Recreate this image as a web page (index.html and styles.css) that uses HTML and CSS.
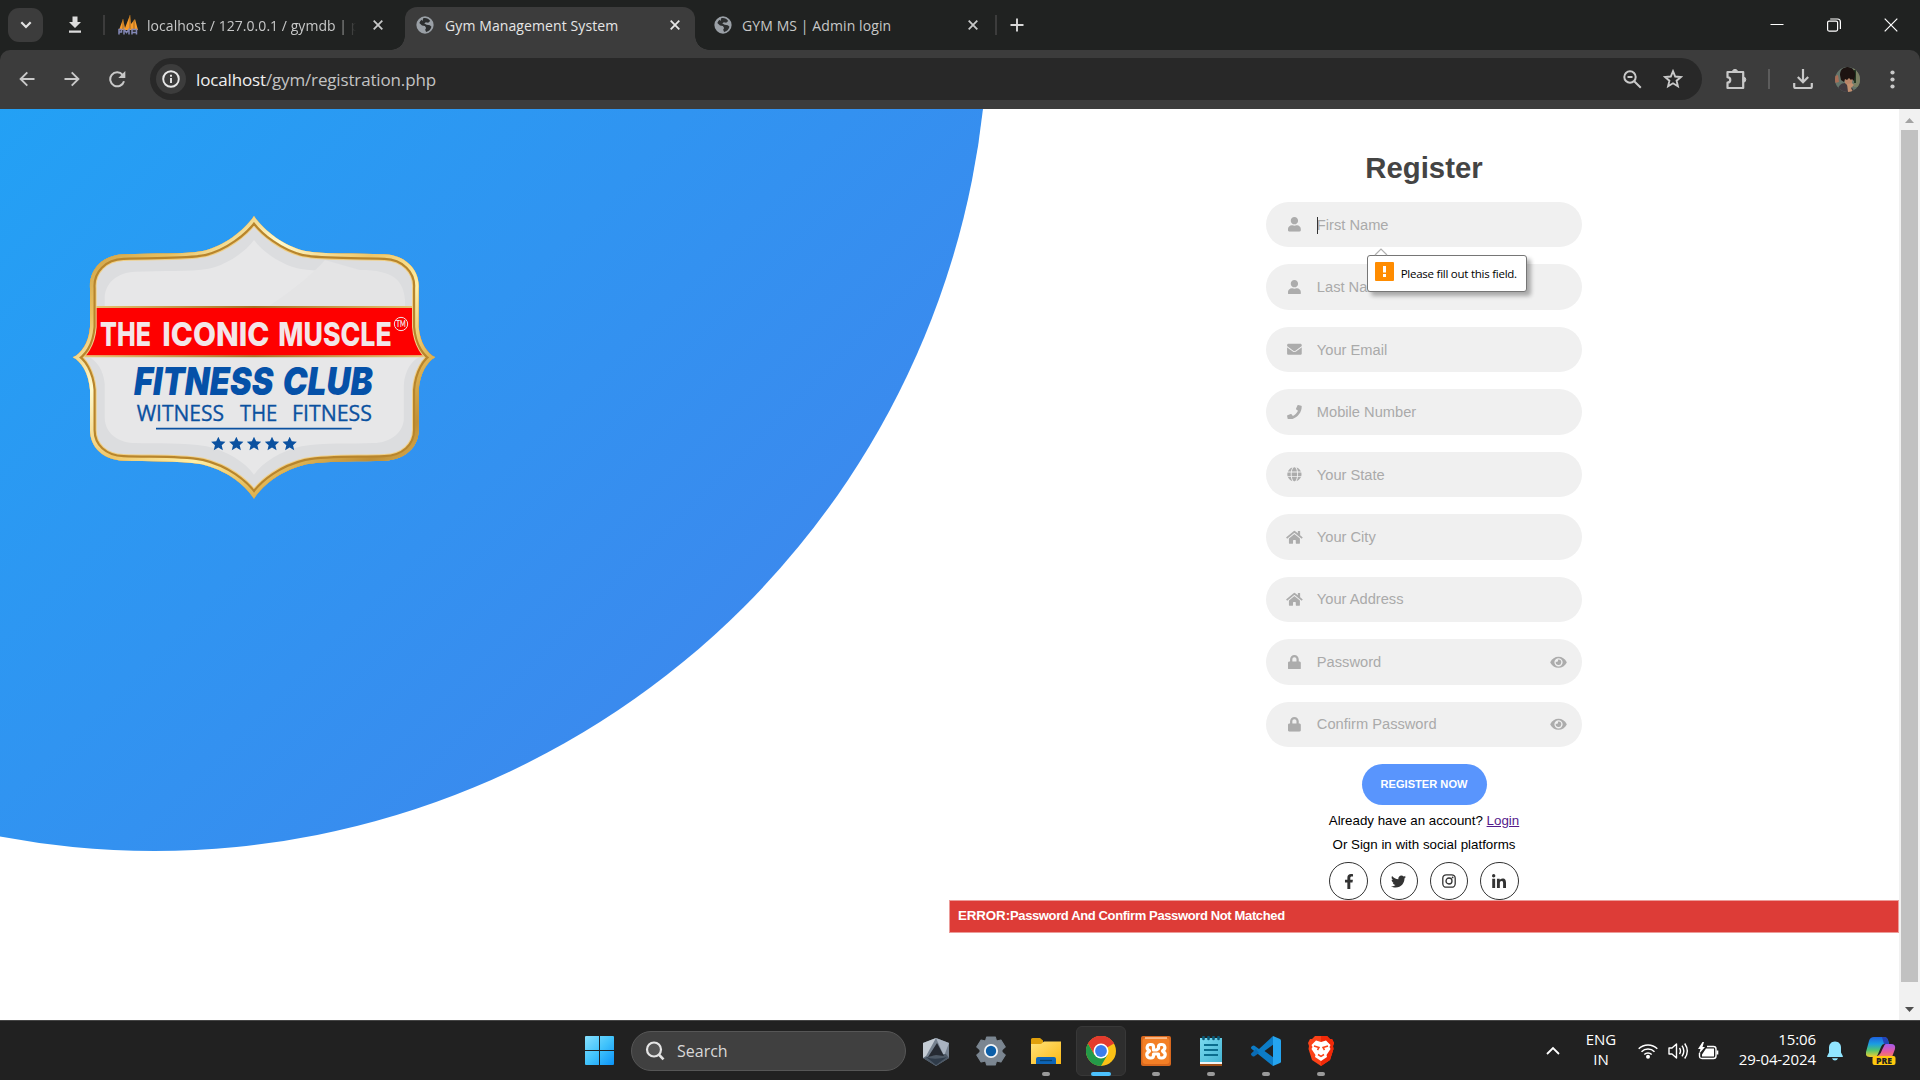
FILE: index.html
```html
<!DOCTYPE html>
<html lang="en">
<head>
<meta charset="utf-8">
<title>Gym Management System</title>
<link rel="stylesheet" href="styles.css">
</head>
<body>
<svg class="sprite" aria-hidden="true">
  <symbol id="i-user" viewBox="0 0 448 512"><path d="M224 256c70.700 0 128-57.300 128-128S294.700 0 224 0 96 57.300 96 128s57.300 128 128 128zm89.600 32h-16.700c-22.200 10.200-46.900 16-72.900 16s-50.600-5.800-72.900-16h-16.700C60.200 288 0 348.200 0 422.400V464c0 26.500 21.500 48 48 48h352c26.500 0 48-21.500 48-48v-41.600c0-74.200-60.200-134.400-134.400-134.400z"/></symbol>
  <symbol id="i-mail" viewBox="0 0 512 512"><path d="M502.300 190.800c3.900-3.100 9.700-.2 9.700 4.700V400c0 26.500-21.500 48-48 48H48c-26.500 0-48-21.500-48-48V195.600c0-5 5.700-7.800 9.700-4.700 22.400 17.400 52.100 39.500 154.100 113.600 21.100 15.400 56.700 47.800 92.200 47.600 35.700.3 72-32.800 92.300-47.600 102-74.100 131.600-96.300 154-113.700zM256 320c23.200.4 56.600-29.200 73.400-41.400 132.700-96.300 142.800-104.700 173.400-128.700 5.800-4.500 9.200-11.500 9.200-18.900v-19c0-26.500-21.500-48-48-48H48c-26.500 0-48 21.500-48 48v19c0 7.400 3.400 14.300 9.200 18.900 30.600 23.900 40.700 32.400 173.400 128.700 16.800 12.200 50.200 41.800 73.400 41.400z"/></symbol>
  <symbol id="i-phone" viewBox="0 0 512 512"><path d="M493.400 24.600l-104-24c-11.300-2.600-22.900 3.300-27.500 13.900l-48 112c-4.200 9.800-1.400 21.300 6.900 28l60.600 49.600c-36 76.700-98.900 140.500-177.200 177.200l-49.600-60.600c-6.800-8.300-18.200-11.100-28-6.900l-112 48C3.900 366.500-2 378.100.6 389.400l24 104C27.100 504.200 36.700 512 48 512c256.100 0 464-207.500 464-464 0-11.200-7.700-20.900-18.600-23.400z"/></symbol>
  <symbol id="i-globe" viewBox="0 0 496 512"><path d="M336.500 160C322 70.700 287.800 8 248 8s-74 62.700-88.500 152h177zM152 256c0 22.200 1.200 43.500 3.300 64h185.300c2.100-20.500 3.300-41.800 3.300-64s-1.200-43.500-3.300-64H155.300c-2.100 20.500-3.300 41.800-3.300 64zm324.700-96c-28.600-67.900-86.500-120.400-158-141.600 24.400 33.800 41.200 84.700 50 141.600h108zM177.200 18.400C105.800 39.600 47.800 92.100 19.300 160h108c8.700-56.900 25.500-107.800 49.900-141.600zM487.400 192H372.700c2.100 21 3.300 42.500 3.300 64s-1.200 43-3.300 64h114.600c5.500-20.500 8.600-41.800 8.600-64s-3.100-43.500-8.500-64zM120 256c0-21.500 1.200-43 3.300-64H8.600C3.200 212.500 0 233.800 0 256s3.200 43.500 8.600 64h114.600c-2-21-3.200-42.500-3.200-64zm39.500 96c14.500 89.300 48.700 152 88.500 152s74-62.700 88.500-152h-177zm159.300 141.600c71.400-21.200 129.400-73.700 158-141.600h-108c-8.800 56.900-25.600 107.800-50 141.600zM19.300 352c28.600 67.900 86.500 120.400 158 141.600-24.400-33.800-41.200-84.700-50-141.600h-108z"/></symbol>
  <symbol id="i-home" viewBox="0 0 576 512"><path d="M280.370 148.260L96 300.110V464a16 16 0 0 0 16 16l112.060-.29a16 16 0 0 0 15.920-16V368a16 16 0 0 1 16-16h64a16 16 0 0 1 16 16v95.640a16 16 0 0 0 16 16.050L464 480a16 16 0 0 0 16-16V300L295.670 148.260a12.190 12.190 0 0 0-15.300 0zM571.600 251.470L488 182.560V44.050a12 12 0 0 0-12-12h-56a12 12 0 0 0-12 12v72.610L318.470 43a48 48 0 0 0-61 0L4.340 251.470a12 12 0 0 0-1.600 16.900l25.500 31A12 12 0 0 0 45.150 301l235.220-193.740a12.190 12.190 0 0 1 15.300 0L530.900 301a12 12 0 0 0 16.900-1.600l25.500-31a12 12 0 0 0-1.700-16.930z"/></symbol>
  <symbol id="i-lock" viewBox="0 0 448 512"><path d="M400 224h-24v-72C376 68.200 307.800 0 224 0S72 68.200 72 152v72H48c-26.500 0-48 21.500-48 48v192c0 26.500 21.500 48 48 48h352c26.500 0 48-21.500 48-48V272c0-26.500-21.500-48-48-48zm-104 0H152v-72c0-39.700 32.300-72 72-72s72 32.300 72 72v72z"/></symbol>
  <symbol id="i-eye" viewBox="0 0 576 512"><path d="M572.520 241.400C518.290 135.590 410.930 64 288 64S57.680 135.640 3.480 241.410a32.350 32.350 0 0 0 0 29.190C57.710 376.410 165.070 448 288 448s230.320-71.640 284.520-177.410a32.350 32.350 0 0 0 0-29.190zM288 400a144 144 0 1 1 144-144 143.930 143.930 0 0 1-144 144zm0-240a95.310 95.310 0 0 0-25.310 3.790 47.850 47.850 0 0 1-66.900 66.900A95.780 95.780 0 1 0 288 160z"/></symbol>
  <symbol id="i-world" viewBox="0 0 20 20"><circle cx="10" cy="10" r="9.600" fill="#9aa0a6"/><path d="M8 2.600c3-.8 6.200.4 7.800 3L13.500 7.600l-2.600-.7-1.700 1.500 2.600 1.400 3.600.5 1.800 1.600c-.7 2.900-3 5.200-6 5.800l-1-2.300 1-2-1.300-2.300-3.200-.5-3-2.900c.5-1.300 1.300-2.500 2.400-3.400l1.100 1.300z" fill="#2c2e2f"/></symbol>
  <symbol id="i-close" viewBox="0 0 12 12"><path d="M1.700 1.700l8.600 8.600m0-8.600l-8.600 8.600" fill="none" stroke="currentColor" stroke-width="1.800"/></symbol>
  <symbol id="i-star" viewBox="-10 -10 20 20"><path d="M0-10 2.900-3.600 9.800-3 4.600 1.600 6.200 8.500 0 4.900-6.200 8.500-4.600 1.600-9.800-3-2.900-3.600z"/></symbol>
</svg>

<header class="tabstrip">
  <div class="tab-search"><svg width="12" height="8" viewBox="0 0 12 8"><path d="M1.300 1.300 6 6l4.700-4.700" fill="none" stroke="#e3e3e3" stroke-width="2.200"/></svg></div>
  <div class="tab-pinned"><svg width="14" height="18" viewBox="0 0 14 18" fill="#dcdcdc"><path d="M4.500.5h5V6H13L7 12 1 6h3.500zM1 14.500h12v2.200H1z"/></svg></div>
  <div class="tab tab-db">
    <svg width="20" height="20" viewBox="0 0 20 20"><path d="M1 15 5 4l2 9 5-13 1 9 4-5 3 11z" fill="#f89c2c"/><path d="M5 4v10M12 0v14M16 5v9" stroke="#8a5a20" stroke-width=".8"/><path d="M1 19.500v-5h2.500v2.500H1m5 2.500v-5l2.500 3 2.500-3v5m3 0v-5h4.500v5M14 17.500h4" fill="none" stroke="#8388b6" stroke-width="1.500"/></svg>
    <span class="tab-title faded">localhost / 127.0.0.1 / gymdb | p</span>
    <svg class="x" width="12" height="12"><use href="#i-close"/></svg>
  </div>
  <div class="tab tab-active">
    <svg width="18" height="18"><use href="#i-world"/></svg>
    <span class="tab-title">Gym Management System</span>
    <svg class="x" width="12" height="12"><use href="#i-close"/></svg>
  </div>
  <div class="tab tab-admin">
    <svg width="18" height="18"><use href="#i-world"/></svg>
    <span class="tab-title">GYM MS | Admin login</span>
    <svg class="x" width="12" height="12"><use href="#i-close"/></svg>
  </div>
  <svg class="new-tab" width="14" height="14" viewBox="0 0 14 14"><path d="M7 .5v13M.5 7h13" stroke="#d8d8d8" stroke-width="1.900"/></svg>
  <div class="window-buttons">
    <svg width="14" height="14" viewBox="0 0 14 14"><path d="M.5 6.500h13" stroke="#fff"/></svg>
    <svg width="14" height="14" viewBox="0 0 14 14"><g fill="none" stroke="#fff" stroke-width="1.200"><rect x=".6" y="3.100" width="10" height="10" rx="1.500"/><path d="M3.200 1h7.300c1.700 0 2.900 1.200 2.900 2.900V11"/></g></svg>
    <svg width="14" height="14" viewBox="0 0 14 14"><path d="M.7.7l12.600 12.600m0-12.600L.7 13.300" stroke="#fff" stroke-width="1.200"/></svg>
  </div>
</header>

<nav class="toolbar">
  <div class="nav-buttons">
    <svg width="16" height="16" viewBox="0 0 16 16"><path d="M15.500 8H1.800M8.300 1.300 1.600 8l6.700 6.700" fill="none" stroke="#c9c9c9" stroke-width="1.900"/></svg>
    <svg width="16" height="16" viewBox="0 0 16 16"><path d="M.5 8h13.700M7.700 1.300 14.400 8l-6.700 6.700" fill="none" stroke="#c9c9c9" stroke-width="1.900"/></svg>
    <svg width="17" height="17" viewBox="0 0 17 17"><path d="M15 10.200A7 7 0 1 1 13.600 3.800L15.500 5.700" fill="none" stroke="#c9c9c9" stroke-width="2"/><path d="M16.300 0v7H9.300z" fill="#c9c9c9"/></svg>
  </div>
  <div class="omnibox">
    <div class="site-info"><svg width="18" height="18" viewBox="0 0 18 18"><circle cx="9" cy="9" r="7.800" fill="none" stroke="#e8e8e8" stroke-width="1.900"/><path d="M9 8v5M9 4.800v1.900" stroke="#e8e8e8" stroke-width="1.900"/></svg></div>
    <span class="url"><b>localhost</b>/gym/registration.php</span>
    <svg class="zoom-icon" width="19" height="19" viewBox="0 0 19 19"><g fill="none" stroke="#c9c9c9" stroke-width="2"><circle cx="7" cy="7" r="5.700"/><path d="M11.200 11.200l6.600 6.600M4.500 7h5"/></g></svg>
    <svg width="20" height="20" viewBox="0 0 20 20"><path d="M10 2.200l2.200 5.300 5.700.5-4.300 3.700 1.300 5.600-4.900-3-4.900 3 1.300-5.600L2.100 8l5.700-.5z" fill="none" stroke="#c9c9c9" stroke-width="1.900"/></svg>
  </div>
  <svg class="puzzle" width="22" height="22" viewBox="0 0 22 22"><path d="M2.500 4h15.700v16H2.500v-5.300c3.700-.5 3.700-5 0-5.500z" fill="none" stroke="#c9c9c9" stroke-width="2.200" stroke-linejoin="round"/><path d="M7.400 4a2.600 2.600 0 0 1 5.200 0zM18.200 9a2.600 2.600 0 0 1 0 5.200z" fill="#c9c9c9" stroke="#c9c9c9"/></svg>
  <i class="divider"></i>
  <svg class="downloads" width="20" height="20" viewBox="0 0 20 20"><path d="M10 0v13M4.800 8 10 13.200 15.200 8M1.200 14v3.700c0 .8.500 1.300 1.300 1.300h15c.8 0 1.300-.5 1.300-1.300V14" fill="none" stroke="#c9c9c9" stroke-width="2.200"/></svg>
  <svg class="avatar" width="25" height="25" viewBox="0 0 25 25"><clipPath id="av"><circle cx="12.500" cy="12.500" r="12.500"/></clipPath><g clip-path="url(#av)"><path fill="#65756b" d="M0 0h25v25H0z"/><path fill="#7c8063" d="M18 0h7v20h-6z"/><path fill="#233824" d="M19 3h2v13h-2z"/><path fill="#a96e56" d="M0 9l3-1 1 7-4 1z"/><path fill="#403a3f" d="M2 25c1-6 4-9 8-9l5 2 5 7z"/><path fill="#b98568" d="M9 10h9l-1 6-4 3-3-3z"/><path fill="#1d1311" d="M5 8C5 2 9 0 13 0s8 4 7 9l-1 5-2-2-1 1-2-2-2 2-2-1-1 3-3-2z"/><path fill="#c2906f" d="M12 17l5-1 2 2-3 3 2 4-5 0z"/></g></svg>
  <svg class="dots" width="5" height="19" viewBox="0 0 5 19" fill="#c9c9c9"><circle cx="2.500" cy="2.500" r="2.100"/><circle cx="2.500" cy="9.500" r="2.100"/><circle cx="2.500" cy="16.500" r="2.100"/></svg>
</nav>

<main class="viewport">
  <div class="page">
    <div class="circle"></div>
    <section class="brand">
      <svg width="390" height="310" viewBox="0 0 1170 930">
        <defs>
          <path id="badge" d="M582 48C550 95 490 138 432 152C370 164 280 158 190 163C130 165 86 208 90 265L90 380C86 430 64 460 38 472C64 484 86 520 90 570L90 690C90 742 130 780 190 782C260 786 350 780 425 793C495 810 552 850 582 896C612 850 669 810 739 793C814 780 904 786 974 782C1034 780 1076 742 1076 690L1076 570C1080 520 1102 484 1126 472C1102 460 1080 430 1076 380L1076 265C1080 208 1034 165 974 163C884 158 794 164 732 152C674 138 614 95 582 48Z"/>
          <clipPath id="inside"><use href="#badge"/></clipPath>
          <linearGradient id="gold" x1="0" y1="0" x2="1" y2="1"><stop offset="0" stop-color="#b98a35"/><stop offset=".2" stop-color="#e8c060"/><stop offset=".33" stop-color="#fffbd0"/><stop offset=".48" stop-color="#efc668"/><stop offset=".6" stop-color="#fff0a8"/><stop offset=".72" stop-color="#e6bd5c"/><stop offset=".84" stop-color="#c08f35"/><stop offset="1" stop-color="#f0cf70"/></linearGradient>
          <linearGradient id="goldline"><stop offset="0" stop-color="#edca78"/><stop offset=".5" stop-color="#a87322"/><stop offset="1" stop-color="#edca78"/></linearGradient>
        </defs>
        <g clip-path="url(#inside)">
          <use href="#badge" fill="#dcdddf"/>
          <use href="#badge" fill="#e7e7e8" transform="translate(52.400 80.200) scale(.91 .83)"/>
          <path d="M620 323C700 270 760 220 795 180L900 210C1000 210 1030 240 1035 300V323z" fill="#e4e4e5"/>
          <path d="M30 323h1104v144H30z" fill="#fe0000"/>
          <path d="M100 321h964M50 469h1064" stroke="url(#goldline)" stroke-width="6"/>
          <use href="#badge" fill="none" stroke="#f0cf86" stroke-width="40"/>
          <use href="#badge" fill="none" stroke="#b8852c" stroke-width="34"/>
          <use href="#badge" fill="none" stroke="url(#gold)" stroke-width="21"/>
        </g>
        <text class="logo-line1" x="120" y="437" textLength="153" lengthAdjust="spacingAndGlyphs">THE</text>
        <text class="logo-line1" x="307" y="437" textLength="321" lengthAdjust="spacingAndGlyphs">ICONIC</text>
        <text class="logo-line1" x="655" y="437" textLength="340" lengthAdjust="spacingAndGlyphs">MUSCLE</text>
        <circle cx="1023" cy="372" r="20" fill="none" stroke="#f0e6e8" stroke-width="3"/>
        <text class="logo-tm" x="1009" y="381" textLength="28" lengthAdjust="spacingAndGlyphs">TM</text>
        <text class="logo-line2" x="222" y="585" textLength="418" lengthAdjust="spacingAndGlyphs">FITNESS</text>
        <text class="logo-line2" x="668" y="585" textLength="270" lengthAdjust="spacingAndGlyphs">CLUB</text>
        <text class="logo-line3" x="230" y="662" textLength="262" lengthAdjust="spacingAndGlyphs">WITNESS</text>
        <text class="logo-line3" x="540" y="662" textLength="112" lengthAdjust="spacingAndGlyphs">THE</text>
        <text class="logo-line3" x="696" y="662" textLength="240" lengthAdjust="spacingAndGlyphs">FITNESS</text>
        <path d="M288 686h587" stroke="#0b51a0" stroke-width="5"/>
        <g fill="#0b51a0"><use href="#i-star" x="453" y="710" width="44" height="44"/><use href="#i-star" x="507" y="710" width="44" height="44"/><use href="#i-star" x="560" y="710" width="44" height="44"/><use href="#i-star" x="614" y="710" width="44" height="44"/><use href="#i-star" x="667" y="710" width="44" height="44"/></g>
      </svg>
    </section>
    <section class="signup">
      <h2 class="title">Register</h2>
      <div class="field focused"><svg class="ico"><use href="#i-user"/></svg><span class="placeholder">First Name</span>
        <div class="bubble"><svg class="bubble-arrow" width="14" height="8" viewBox="0 0 14 8"><path d="M1 7l6-6 6 6" fill="#fff" stroke="#b0b0b0" stroke-width="1.200"/></svg><span class="warn"><svg width="19" height="19" viewBox="0 0 19 19"><path d="M8 4h3v6.500H8zM8 12h3v3H8z" fill="#fff"/></svg></span><span class="bubble-text">Please fill out this field.</span></div>
      </div>
      <div class="field"><svg class="ico"><use href="#i-user"/></svg><span class="placeholder">Last Name</span></div>
      <div class="field"><svg class="ico"><use href="#i-mail"/></svg><span class="placeholder">Your Email</span></div>
      <div class="field"><svg class="ico"><use href="#i-phone"/></svg><span class="placeholder">Mobile Number</span></div>
      <div class="field"><svg class="ico"><use href="#i-globe"/></svg><span class="placeholder">Your State</span></div>
      <div class="field"><svg class="ico"><use href="#i-home"/></svg><span class="placeholder">Your City</span></div>
      <div class="field"><svg class="ico"><use href="#i-home"/></svg><span class="placeholder">Your Address</span></div>
      <div class="field"><svg class="ico"><use href="#i-lock"/></svg><span class="placeholder">Password</span><svg class="eye"><use href="#i-eye"/></svg></div>
      <div class="field"><svg class="ico"><use href="#i-lock"/></svg><span class="placeholder">Confirm Password</span><svg class="eye"><use href="#i-eye"/></svg></div>
      <button class="submit">REGISTER NOW</button>
      <p class="note have-account">Already have an account? <a href="#">Login</a></p>
      <p class="note">Or Sign in with social platforms</p>
      <div class="social">
        <a><svg width="10" height="15" viewBox="0 0 320 512"><path d="M279.140 288l14.220-92.660h-88.910v-60.130c0-25.350 12.420-50.060 52.240-50.060h40.420V6.260S260.430 0 225.360 0c-73.220 0-121.080 44.380-121.080 124.720v70.620H22.890V288h81.390v224h100.170V288z"/></svg></a>
        <a><svg width="15" height="15" viewBox="0 0 512 512"><path d="M459.370 151.716c.325 4.548.325 9.097.325 13.645 0 138.720-105.583 298.558-298.558 298.558-59.452 0-114.680-17.219-161.137-47.106 8.447.974 16.568 1.299 25.340 1.299 49.055 0 94.213-16.568 130.274-44.832-46.132-.975-84.792-31.188-98.112-72.772 6.498.974 12.995 1.624 19.818 1.624 9.421 0 18.843-1.300 27.614-3.573-48.081-9.747-84.143-51.980-84.143-102.985v-1.299c13.969 7.797 30.214 12.670 47.431 13.319-28.264-18.843-46.781-51.005-46.781-87.391 0-19.492 5.197-37.360 14.294-52.954 51.655 63.675 129.300 105.258 216.365 109.807-1.624-7.797-2.599-15.918-2.599-24.040 0-57.828 46.782-104.934 104.934-104.934 30.213 0 57.502 12.670 76.670 33.137 23.715-4.548 46.456-13.320 66.599-25.340-7.798 24.366-24.366 44.833-46.132 57.827 21.117-2.273 41.584-8.122 60.426-16.243-14.292 20.791-32.161 39.308-52.628 54.253z"/></svg></a>
        <a><svg width="14" height="14" viewBox="0 0 14 14"><g fill="none" stroke="#333" stroke-width="1.300"><rect x=".8" y=".8" width="12.400" height="12.400" rx="3.500"/><circle cx="7" cy="7" r="3"/></g><circle cx="10.600" cy="3.400" r=".9"/></svg></a>
        <a><svg width="14" height="15" viewBox="0 0 448 480"><path d="M100.280 448H7.400V148.900h92.880zM53.790 108.100C24.090 108.100 0 83.500 0 53.800a53.790 53.790 0 0 1 107.580 0c0 29.700-24.100 54.300-53.790 54.300zM447.900 448h-92.680V302.400c0-34.700-.7-79.200-48.290-79.200-48.290 0-55.690 37.700-55.690 76.700V448h-92.780V148.900h89.080v40.800h1.300c12.400-23.500 42.690-48.300 87.880-48.300 94 0 111.280 61.900 111.280 142.300V448z"/></svg></a>
      </div>
      <div class="alert"><b>ERROR:</b><span>Password And Confirm Password Not Matched</span></div>
    </section>
  </div>
  <aside class="scrollbar">
    <svg width="21" height="21" viewBox="0 0 21 21"><path d="M6 14l4.500-5 4.500 5z" fill="#a3a3a3"/></svg>
    <div class="thumb"></div>
    <svg class="down" width="21" height="21" viewBox="0 0 21 21"><path d="M6 8l4.500 5L15 8z" fill="#505050"/></svg>
  </aside>
</main>

<footer class="taskbar">
  <svg class="start" width="29" height="29" viewBox="0 0 29 29"><linearGradient id="win" x1="0" y1="0" x2="29" y2="29" gradientUnits="userSpaceOnUse"><stop offset="0" stop-color="#87e0fd"/><stop offset=".5" stop-color="#41c3fb"/><stop offset="1" stop-color="#0b93f8"/></linearGradient><path fill="url(#win)" d="M0 1q0-1 1-1h13v14H0zM15 0h13q1 0 1 1v13H15zM0 15h14v14H1q-1 0-1-1zM15 15h14v13q0 1-1 1H15z"/></svg>
  <div class="search"><svg width="20" height="20" viewBox="0 0 20 20"><circle cx="9" cy="8.500" r="7" fill="#555" stroke="#e4e4e4" stroke-width="2.200"/><path d="M13.800 13.500l4.700 4.800" stroke="#e4e4e4" stroke-width="2.600"/></svg><span>Search</span></div>
  <div class="apps">
    <div class="app"><svg width="30" height="30" viewBox="0 0 30 30"><path d="M15 2l13 5v15l-13 8-13-8V7z" fill="#75818f"/><path d="M15 2l13 5-5 13z" fill="#a9b3c0"/><path d="M15 2 5 20 2 22V7z" fill="#c4ccd4"/><path d="M15 30 2 22l12-3 11-1 3 4z" fill="#4d5966"/><path d="M16 7l-9 14 8-2 8 1z" fill="#252a32"/><path d="M4 20c6 4 14 3 22 1l-11 8z" fill="#2f3b49"/></svg></div>
    <div class="app"><svg width="30" height="30" viewBox="0 0 30 30"><path d="M11 1h8l1 4 4-1 4 7-3 3v2l3 3-4 7-4-1-1 4h-8l-1-4-4 1-4-7 3-3v-2l-3-3 4-7 4 1z" transform="translate(-1.500 0) scale(1.100 1)" fill="#7b8691" stroke="#7b8691" stroke-linejoin="round"/><circle cx="15" cy="15" r="7" fill="#f2f4f6"/><circle cx="15" cy="15" r="5.200" fill="#0c5fa8"/></svg></div>
    <div class="app run"><svg width="30" height="30" viewBox="0 0 30 30"><linearGradient id="fold" x1="0" y1="0" x2="1" y2="1"><stop offset="0" stop-color="#ffe27a"/><stop offset="1" stop-color="#fcb914"/></linearGradient><path d="M0 3.500Q0 2 1.500 2H9l3 2.500V10H0z" fill="#e0a00c"/><path d="M0 8h10l3-2.500h17V28H0z" fill="url(#fold)"/><path d="M5 28v-5q0-2 2-2h16q2 0 2 2v5z" fill="#0d65b8"/><path d="M9 24.500h12" stroke="#07406f" stroke-width="1.300"/></svg></div>
    <div class="app run selected"><svg width="30" height="30" viewBox="0 0 30 30"><clipPath id="cr"><circle cx="15" cy="15" r="15"/></clipPath><circle cx="15" cy="15" r="15" fill="#fbc116"/><path d="M15 15 2 7.500A15 15 0 0 1 28 7.500z" fill="#e33b2e"/><path d="M2 7.500A15 15 0 0 0 15 30l6.500-11.200L8.500 18.800z" fill="#249a48"/><path d="M15 7.500h15V0H0l2 7.500 6.500 11.200 3-9z" fill="#e33b2e" clip-path="url(#cr)"/><circle cx="15" cy="15" r="7.500" fill="#fff"/><circle cx="15" cy="15" r="5.900" fill="#3b7ded"/></svg></div>
    <div class="app run"><svg width="30" height="30" viewBox="0 0 30 30"><rect width="30" height="30" rx="2" fill="#d9681e"/><rect x="1.500" y="2" width="27" height="26" rx="3" fill="#f37f26"/><path d="M4 2h22" stroke="#ffd3ae" stroke-width="1.400"/><path d="M10 8.500h-.8a3 3 0 0 0-1.700 5.500l1 1-1 1a3.200 3.200 0 0 0 1.700 6h.8a2.500 2.500 0 0 0 2.500-2.500V18h5v1.500A2.500 2.500 0 0 0 20 22h.8a3.200 3.200 0 0 0 1.700-6l-1-1 1-1a3 3 0 0 0-1.700-5.500H20a2.500 2.500 0 0 0-2.500 2.500v1.500l-2 1.500h-3V11A2.500 2.500 0 0 0 10 8.500z" fill="none" stroke="#fff" stroke-width="3.200" stroke-linejoin="round"/></svg></div>
    <div class="app run"><svg width="30" height="30" viewBox="0 0 30 30"><path d="M4 26h22v4H4z" fill="#a04f16"/><path d="M4 24h22v4H4z" fill="#f3f4f4"/><linearGradient id="note" x1="0" y1="0" x2="1" y2="1"><stop offset="0" stop-color="#7ad9ef"/><stop offset="1" stop-color="#45b5d3"/></linearGradient><path d="M4 2h22v24H4z" fill="url(#note)"/><path d="M8 9h14M8 14h14M8 19h14" stroke="#0b6d8d" stroke-width="2"/><path d="M7.500 1v2M12.500 1v2M17.500 1v2M22.500 1v2" stroke="#0a5a78" stroke-width="2.600" stroke-linecap="round"/></svg></div>
    <div class="app run"><svg width="30" height="30" viewBox="0 0 30 30"><path d="M22 0 8 13 3.500 9.700Q2.300 9 1.300 9.900L.4 10.800q-.8 1 0 1.900L22 30l1-8-9.500-7L23 8z" fill="#0c7cc7"/><path d="M8 17l-4.500 3.300q-1.200.7-2.200-.2l-.9-.9q-.8-1 0-1.900L5 13z" fill="#0a6cb5"/><path d="M22 0l7 3q1 .5 1 1.500v21q0 1-1 1.500l-7 3z" fill="#25a4ef"/></svg></div>
    <div class="app run"><svg width="30" height="30" viewBox="0 0 30 30"><path d="M9 0h12l3 3h2l2 4-1 3 .5 3L24 24l-9 6-9-6L2.500 13 3 10 2 7l2-4h2z" fill="#fb4218"/><path d="M15 0h6l3 3h2l2 4-1 3 .5 3L24 24l-9 6z" fill="#f22908"/><path d="M10 4.500 15 6l5-1.500L24.500 9l-1 2 1 2-4 6 .5 2-6 4-6-4 .5-2-4-6 1-2-1-2z" fill="#fff"/><path d="M8 10l5 1.500-1.500 2.500M22 10l-5 1.500 1.500 2.500M12 18.500l3 1.800 3-1.800" fill="none" stroke="#fb4218" stroke-width="1.500"/></svg></div>
  </div>
  <div class="tray">
    <svg class="chev" width="14" height="9" viewBox="0 0 14 9"><path d="M1 8l6-6 6 6" fill="none" stroke="#fff" stroke-width="1.800"/></svg>
    <div class="lang"><span>ENG</span><span>IN</span></div>
    <svg class="wifi" width="20" height="16" viewBox="0 0 20 16"><g fill="none" stroke="#fff" stroke-width="1.500"><path d="M.7 5.700a13.300 13.300 0 0 1 18.600 0M3.500 8.700a9.200 9.200 0 0 1 13 0M6.300 11.500a5.200 5.200 0 0 1 7.400 0"/></g><circle cx="10" cy="13.700" r="2" fill="#fff"/></svg>
    <svg class="vol" width="21" height="18" viewBox="0 0 21 18"><g fill="none" stroke="#fff" stroke-width="1.400" stroke-linejoin="round"><path d="M1 6h3l4.500-4v14L4 12H1z"/><path d="M11.500 6q2 3 0 6M14 3.700q3.700 5.300 0 10.600M16.700 1.500q5.200 7.500 0 15"/></g></svg>
    <svg class="bat" width="21" height="18" viewBox="0 0 21 18"><path d="M9 4.500h6.500q2.500 0 2.500 2.500v7q0 2.500-2.500 2.500H4q-2.500 0-2.500-2.500V11" fill="none" stroke="#fff" stroke-width="1.400"/><path d="M8 6.500h8v8H4v-2zM18.500 8.500h1.800v4h-1.800zM4.500 0 0 7h2.500L1 12l6-7H4.500L6 0z" fill="#fff"/></svg>
    <div class="clock"><span class="time">15:06</span><span class="date">29-04-2024</span></div>
    <svg class="bell" width="16" height="20" viewBox="0 0 16 20"><path d="M8 .5c4 0 6 3 6 6v5l1.800 3.500v1H.2v-1L2 11.500v-5c0-3 2-6 6-6zM5 17.200h6q-.8 2.300-3 2.300t-3-2.300z" fill="#91e5ff"/></svg>
    <svg class="copilot" width="30" height="30" viewBox="0 0 30 30"><defs><linearGradient id="c1" x1="0" y1="0" x2="0" y2="1"><stop offset="0" stop-color="#1e62e0"/><stop offset=".35" stop-color="#1b9de2"/><stop offset=".65" stop-color="#4fc373"/><stop offset="1" stop-color="#f2cf2d"/></linearGradient><linearGradient id="c2" x1="0" y1="0" x2="0" y2="1"><stop offset="0" stop-color="#a25bee"/><stop offset=".6" stop-color="#e85a9e"/><stop offset="1" stop-color="#f78557"/></linearGradient></defs><path d="M8 1h10q3 0 4 3l1 4h-5q-2 0-3 3l-3 7q-1 3-4 3H4q-5 0-4-5L3 5q1-4 5-4z" fill="url(#c1)"/><path d="M16 1h2q3 0 4 3l1 4h-5z" fill="#2444b8"/><path d="M20 8h5q5 0 4 5l-3 8H6l4-1q4 0 6-6l2-4q.6-2 2-2z" fill="url(#c2)"/><rect x="6.500" y="20" width="23" height="9" rx="2" fill="#ffc90e"/><text class="pre" x="10" y="27.500" textLength="16" lengthAdjust="spacingAndGlyphs">PRE</text></svg>
  </div>
</footer>
</body>
</html>
```
FILE: styles.css
```css
* { box-sizing: border-box; }
body {
  margin: 0;
  width: 1920px;
  height: 1080px;
  overflow: hidden;
  display: flex;
  flex-direction: column;
  background: #202221;
  font-family: "Open Sans", "Noto Sans", sans-serif;
}
svg { display: block; flex: none; }
.sprite { position: absolute; width: 0; height: 0; }

/* browser tabs */
.tabstrip { height: 50px; display: flex; align-items: center; background: #202221; color: #c7c8c8; }
.tab-search { width: 35px; height: 34px; margin-left: 8px; border-radius: 11px; background: #3c3c3c; display: flex; align-items: center; justify-content: center; }
.tab-pinned { width: 62px; height: 20px; padding-left: 3px; display: flex; align-items: center; justify-content: center; border-right: 2px solid #3c3c3c; }
.tab { display: flex; align-items: center; height: 43px; margin-top: 7px; padding-bottom: 7px; }
.tab-title { flex: 1; white-space: nowrap; overflow: hidden; font-size: 14px; letter-spacing: 0.1px; }
.faded { mask-image: linear-gradient(90deg, #000 190px, transparent 209px); }
.tab-db { width: 300px; padding-left: 13px; padding-right: 21px; gap: 9px; }
.tab-db .tab-title { letter-spacing: 0.05px; }
.tab-db .x { margin-left: 5px; }
.tab-active { width: 290px; padding-left: 11px; padding-right: 14px; gap: 11px; background: #3c3c3c; color: #e6e6e6; border-radius: 12px 12px 0 0; position: relative; }
.tab-active::before, .tab-active::after { content: ""; position: absolute; bottom: 0; width: 14px; height: 14px; }
.tab-active::before { left: -14px; background: radial-gradient(circle at 0 0, transparent 13.5px, #3c3c3c 14px); }
.tab-active::after { right: -14px; background: radial-gradient(circle at 100% 0, transparent 13.5px, #3c3c3c 14px); }
.tab-admin { width: 302px; height: 20px; margin-top: 0; padding: 0 16px 0 19px; gap: 10px; border-right: 2px solid #3c3c3c; }
.new-tab { margin-left: 13px; }
.window-buttons { display: flex; gap: 43px; margin-left: auto; margin-right: 22px; }

/* address row */
.toolbar { height: 59px; display: flex; align-items: center; padding-bottom: 1px; background: #3c3c3c; border-radius: 10px 10px 0 0; }
.nav-buttons { display: flex; gap: 29px; padding-left: 19px; width: 150px; }
.omnibox { width: 1552px; height: 42px; border-radius: 21px; background: #282828; display: flex; align-items: center; padding: 0 19px 0 6px; }
.site-info { width: 30px; height: 30px; border-radius: 50%; background: #3c3c3c; display: flex; align-items: center; justify-content: center; }
.url { margin-left: 10px; font-size: 17px; letter-spacing: -0.15px; color: #c3c3c3; flex: 1; }
.url b { font-weight: 400; color: #f0f0f0; }
.zoom-icon { margin-right: 21px; }
.puzzle { margin-left: 23px; }
.divider { width: 2px; height: 20px; margin-left: 21px; background: #5c5c5c; }
.downloads { margin-left: 23px; }
.avatar { margin-left: 22px; }
.dots { margin-left: 30px; }

/* web page */
.viewport { height: 911px; display: flex; background: #fff; }
.page { flex: 1; display: grid; grid-template-columns: 949px 950px; position: relative; overflow: hidden; font-family: "Liberation Sans", Arial, sans-serif; }
.circle { position: absolute; left: -679px; top: -925px; width: 1666.700px; height: 1666.700px; border-radius: 50%; background: linear-gradient(-45deg, #4481eb 0%, #04befe 100%); }
.brand { position: relative; padding: 91px 0 0 60px; }
.logo-line1 { font: 800 99px "Inter", sans-serif; fill: #f3e6e8; }
.logo-tm { font: 700 26px "Lato", sans-serif; fill: #f0e6e8; }
.logo-line2 { font: italic 900 117px "Inter", sans-serif; fill: #0551a8; }
.logo-line3 { font: 400 65px "Open Sans", sans-serif; fill: #0b51a0; stroke: #0b51a0; stroke-width: 1px; }
.signup { display: flex; flex-direction: column; align-items: center; padding-top: 42px; }
.title { margin: 0 0 16.670px; height: 34px; line-height: 34px; font-size: 29.330px; color: #444; }
.field { position: relative; width: 316.670px; height: 45.830px; margin-bottom: 16.670px; padding: 0 5.330px; border-radius: 23px; background: #f0f0f0; display: flex; align-items: center; flex: none; }
.ico { width: 45.830px; height: 14.670px; padding-left: 1px; fill: #acacac; }
.placeholder { flex: 1; font-size: 14.670px; line-height: 18px; color: #aaa; }
.focused .placeholder::before { content: ""; position: absolute; left: 51px; top: 15px; width: 1px; height: 17px; background: #333; }
.eye { width: 17px; height: 14.670px; margin-right: 10.500px; fill: #acacac; }
.bubble { position: absolute; z-index: 2; left: 101px; top: 53px; width: 160px; height: 37px; display: flex; padding: 6px 7px; border: 1px solid #767676; border-radius: 3px; background: #fff; box-shadow: 4px 4px 4px rgba(0,0,0,.3); }
.bubble-arrow { position: absolute; left: 6px; top: -8px; }
.warn { width: 19px; height: 19px; background: #ff8c00; border-radius: 1px; }
.bubble-text { margin-left: 7px; white-space: nowrap; font: 400 11.500px/24px "Open Sans", sans-serif; color: #000; letter-spacing: -0.250px; }
.submit { width: 125px; height: 40.830px; flex: none; padding: 0; border: 0; border-radius: 21px; background: #5995fd; color: #fff; font: 700 11.110px "Liberation Sans", Arial, sans-serif; }
.note { margin: 0; height: 24px; line-height: 24px; font-size: 13.330px; color: #000; }
.have-account { margin-top: 4px; }
.note a { color: #551a8b; }
.social { display: flex; gap: 12px; margin-top: 5px; }
.social a { width: 38.330px; height: 38.330px; border: 1px solid #333; border-radius: 50%; display: flex; align-items: center; justify-content: center; fill: #333; }
.alert { align-self: stretch; height: 33px; padding: 0 8px; border: 1px solid #ec9c99; background: #dd3c37; color: #fff; font-size: 13.330px; font-weight: 700; line-height: 29px; }
.alert b { letter-spacing: -0.1px; }
.alert span { font-size: 13px; letter-spacing: -0.370px; }
.scrollbar { width: 21px; background: #f1f1f1; display: flex; flex-direction: column; align-items: center; }
.thumb { width: 17px; height: 852px; background: #c1c1c1; }
.down { margin-top: auto; }

/* desktop taskbar */
.taskbar { height: 60px; display: flex; align-items: center; background: #212121; border-top: 1px solid #454545; color: #fff; }
.start { margin-left: 585px; }
.search { width: 275px; height: 40px; margin-left: 17px; padding-left: 13px; border: 1px solid #565656; border-radius: 20px; background: #404040; display: flex; align-items: center; gap: 12px; color: #d8d8d8; font-size: 16px; }
.apps { display: flex; margin-left: 2.500px; }
.app { width: 55px; height: 50px; display: flex; align-items: center; justify-content: center; position: relative; }
.selected { width: 50px; margin: 0 2.500px; background: #2e2e2e; border: 1px solid #383838; border-radius: 6px; }
.run::after { content: ""; position: absolute; bottom: 0; width: 8px; height: 4px; border-radius: 2px; background: #9a9a9a; }
.selected::after { width: 20px; background: #4cc2ff; bottom: -1px; }
.tray { display: flex; align-items: center; margin-left: auto; margin-right: 24px; font-size: 15px; line-height: 20px; }
.lang { width: 34px; margin-left: 24px; padding-bottom: 3px; display: flex; flex-direction: column; align-items: center; }
.wifi { margin-left: 20px; }
.vol { margin-left: 10px; }
.bat { margin-left: 9px; }
.clock { width: 97px; padding-bottom: 3px; display: flex; flex-direction: column; align-items: flex-end; letter-spacing: -0.1px; }
.bell { margin-left: 11px; }
.copilot { margin-left: 23px; }
.pre { font: 800 8px "Open Sans", sans-serif; fill: #222; }
```
